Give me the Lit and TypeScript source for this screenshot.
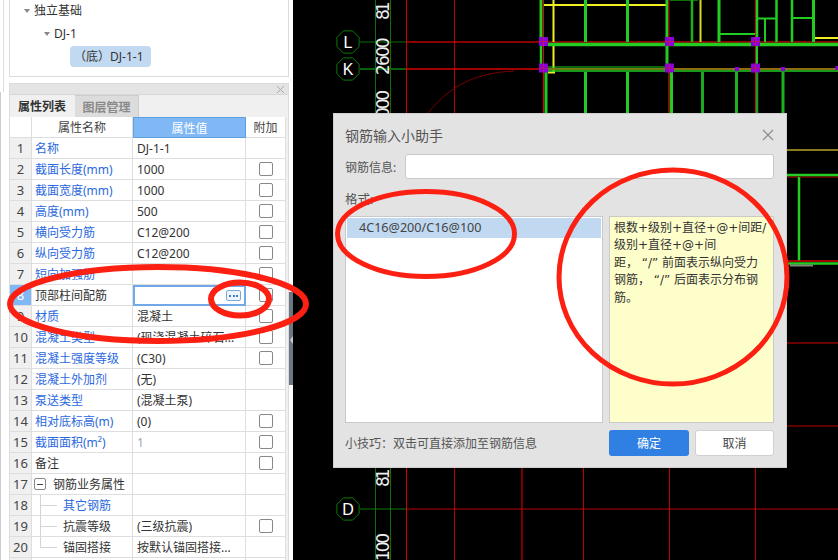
import { LitElement, html, css, svg } from "lit";
import { customElement } from "lit/decorators.js";

interface Row { n: number; name: string; val?: string; link?: boolean; cb?: boolean; muted?: boolean; kind?: string }

const ROWS: Row[] = [
  { n: 1, name: "名称", val: "DJ-1-1", link: true },
  { n: 2, name: "截面长度(mm)", val: "1000", link: true, cb: true },
  { n: 3, name: "截面宽度(mm)", val: "1000", link: true, cb: true },
  { n: 4, name: "高度(mm)", val: "500", link: true, cb: true },
  { n: 5, name: "横向受力筋", val: "C12@200", link: true, cb: true },
  { n: 6, name: "纵向受力筋", val: "C12@200", link: true, cb: true },
  { n: 7, name: "短向加强筋", link: true, cb: true },
  { n: 8, name: "顶部柱间配筋", cb: true, kind: "edit" },
  { n: 9, name: "材质", val: "混凝土", link: true, cb: true },
  { n: 10, name: "混凝土类型", val: "(现浇混凝土碎石...", link: true, cb: true },
  { n: 11, name: "混凝土强度等级", val: "(C30)", link: true, cb: true },
  { n: 12, name: "混凝土外加剂", val: "(无)", link: true },
  { n: 13, name: "泵送类型", val: "(混凝土泵)", link: true },
  { n: 14, name: "相对底标高(m)", val: "(0)", link: true, cb: true },
  { n: 15, name: "截面面积(m²)", val: "1", link: true, cb: true, muted: true },
  { n: 16, name: "备注", cb: true },
  { n: 17, name: "钢筋业务属性", kind: "group" },
  { n: 18, name: "其它钢筋", link: true, kind: "child" },
  { n: 19, name: "抗震等级", val: "(三级抗震)", cb: true, kind: "child" },
  { n: 20, name: "锚固搭接", val: "按默认锚固搭接...", kind: "last" },
  { n: 21, name: "" },
];

const RED = "#b80000";
const GREEN = "#22cc22";
const YEL = "#eeee22";
const PUR = "#8a00dc";

const PILL = "\uFF08底\uFF09DJ-1-1";
const TIP = "小技巧\uFF1A双击可直接添加至钢筋信息";
const NOTE = [
  "根数+级别+直径+@+间距/",
  "级别+直径+@+间",
  "距\uFF0C \u201C/\u201D 前面表示纵向受力",
  "钢筋\uFF0C \u201C/\u201D 后面表示分布钢",
  "筋。",
].join("\n");

const hv = (x1: number, y1: number, x2: number, y2: number, c: string, w = 1) =>
  svg`<line x1=${x1} y1=${y1} x2=${x2} y2=${y2} stroke=${c} stroke-width=${w} />`;

const hept = (cx: number, cy: number, r: number) => {
  const p: string[] = [];
  for (let i = 0; i < 8; i++) {
    const a = (Math.PI * 2 * i) / 8 + Math.PI / 8;
    p.push(`${(cx + r * Math.cos(a)).toFixed(1)},${(cy + r * Math.sin(a)).toFixed(1)}`);
  }
  return p.join(" ");
};

const axis = (cy: number, label: string) => svg`
  <polygon points=${hept(348, cy, 12)} fill="#000" stroke="#0b7a0b" stroke-width="1" />
  <text x="348" y=${cy + 6} text-anchor="middle" fill="#fff" font-size="16" font-family="Liberation Sans, sans-serif">${label}</text>`;

const vtext = (y: number, t: string) => svg`
  <text transform="translate(389 ${y}) rotate(-90)" fill="#eee" font-size="17" letter-spacing="0.3" font-family="DejaVu Sans, sans-serif" textLength=${t.length * 9.5}>${t}</text>`;

const pur = (x: number, y: number, s = 9) => svg`
  <rect x=${x - s / 2} y=${y - s / 2} width=${s} height=${s} fill=${PUR} />
  ${s > 4 ? hv(x - s / 2, y, x + s / 2, y, "#c01060", 1) : ""}
  ${s > 4 ? hv(x, y - s / 2, x, y + s / 2, "#c01060", 1) : ""}`;

@customElement("app-root")
export class AppRoot extends LitElement {
  static styles = css`
    :host {
      display: block;
      position: relative;
      width: 838px;
      height: 560px;
      overflow: hidden;
      background: #fff;
      font-family: "Noto Sans", "Noto Sans CJK SC", sans-serif;
      font-size: 12px;
      color: #333;
    }
    .main { display: flex; height: 560px; }
    .left {
      width: 289px;
      box-sizing: border-box;
      padding-left: 9px;
      display: flex;
      flex-direction: column;
      gap: 6px;
      background:
        linear-gradient(#ddd, #ddd) 3px 0 / 1px 92px no-repeat,
        linear-gradient(#ccc, #ccc) 0 92px / 1px 100% no-repeat,
        #fff;
    }
    .split { width: 4px; padding-top: 292px; flex: none; }
    .split-bar {
      height: 93px;
      background: #6c7783;
      display: flex;
      align-items: center;
      justify-content: center;
    }
    .split-arrow {
      width: 0; height: 0;
      border-top: 4px solid transparent;
      border-bottom: 4px solid transparent;
      border-right: 3px solid #c8ccd0;
      margin-top: 3px;
    }
    .tree {
      height: 77px;
      box-sizing: border-box;
      border: 1px solid #dcdcdc;
      border-top: none;
      background: #fff;
      display: flex;
      flex-direction: column;
      line-height: 17px;
    }
    .tnode { display: flex; align-items: center; height: 23px; }
    .tri {
      width: 0; height: 0;
      border-left: 3.5px solid transparent;
      border-right: 3.5px solid transparent;
      border-top: 4px solid #888;
      margin-right: 4px;
    }
    .t1 { padding-left: 14px; margin-top: -1px; }
    .t2 { padding-left: 34px; }
    .t3 { padding-left: 60px; margin-top: 1px; }
    .pill {
      background: #c2d9f2;
      border-radius: 4px;
      height: 21px;
      width: 81px;
      box-sizing: border-box;
      padding-left: 4px;
      display: flex;
      align-items: center;
      white-space: nowrap;
    }
    .props {
      flex: 1;
      min-height: 0;
      box-sizing: border-box;
      border: 1px solid #dcdcdc;
      border-bottom: none;
      background: #f0f0f0;
      overflow: hidden;
    }
    .phead {
      height: 10px;
      background: #e4e4e4;
      display: flex;
      justify-content: flex-end;
      padding-right: 3px;
      border-bottom: 1px solid #d8d8d8;
    }
    .phead svg { display: block; margin-top: 1px; }
    .tabs { display: flex; height: 22px; }
    .tab {
      width: 64px;
      height: 22px;
      box-sizing: border-box;
      display: flex;
      align-items: center;
      justify-content: center;
      font-weight: 700;
      color: #333;
    }
    .tab.off {
      background: #dcdcdc;
      color: #8a8a8a;
      margin-left: 1px;
      border-right: 1px solid #ccc;
      border-top: 1px solid #ccc;
    }
    .grid { width: 276px; background: #fff; }
    .row {
      display: grid;
      grid-template-columns: 22px 101px 113px 40px;
      height: 21px;
    }
    .c {
      box-sizing: border-box;
      border-right: 1px solid #dedede;
      border-bottom: 1px solid #dedede;
      display: flex;
      align-items: center;
      white-space: nowrap;
      overflow: hidden;
      position: relative;
    }
    .num { justify-content: center; background: #f0f0f0; font-size: 13px; color: #444; }
    .num.sel { background: #7fb8f5; color: #fff; }
    .name { padding-left: 3px; }
    .link { color: #2b69de; }
    .val { padding-left: 4px; }
    .muted { color: #9aa6b4; }
    .head { justify-content: center; color: #444; }
    .head.hval { background: #80b8f6; border: 1px solid #5c9fe2; color: #fff; }
    .add { justify-content: center; }
    .cb {
      width: 12px; height: 12px;
      border: 1px solid #888;
      border-radius: 2px;
      background: #fff;
    }
    .edit { border: 2px solid #71a9e8; justify-content: flex-end; padding-right: 3px; }
    .dots {
      width: 15px; height: 11px;
      box-sizing: border-box;
      border: 1px solid #7aa9dc;
      border-radius: 2px;
      background: #eef5fd;
      display: flex;
      align-items: center;
      justify-content: center;
      gap: 1.5px;
    }
    .dots i { width: 2px; height: 2px; background: #3c7fd0; display: block; }
    .exp {
      width: 12px; height: 12px;
      box-sizing: border-box;
      border: 1px solid #888;
      border-radius: 2px;
      display: flex;
      align-items: center;
      justify-content: center;
      margin-left: -1px;
      margin-right: 7px;
    }
    .exp i { width: 6px; height: 1px; background: #444; display: block; }
    .indent { padding-left: 31px; }
    .guide-v { position: absolute; left: 8px; top: 0; bottom: 0; width: 1px; background: #d4d4d4; }
    .guide-v.half { bottom: 50%; }
    .guide-h { position: absolute; left: 8px; top: 50%; width: 17px; height: 1px; background: #d4d4d4; }

    .canvas { flex: 1; position: relative; background: #000; }
    .canvas svg { display: block; }
    .dialog {
      position: absolute;
      left: 40px;
      top: 113px;
      width: 454px;
      height: 355px;
      box-sizing: border-box;
      background: #e3e3e3;
      border: 1px solid #cfcfcf;
      padding: 11px 12px 11px 11px;
      display: flex;
      flex-direction: column;
      color: #555;
      font-size: 12px;
    }
    .d-title { display: flex; justify-content: space-between; align-items: center; height: 20px; font-size: 14px; }
    .d-info { display: flex; align-items: center; margin-top: 9px; height: 25px; }
    .d-info label { width: 60px; flex: none; white-space: nowrap; }
    .d-input {
      flex: 1;
      height: 25px;
      box-sizing: border-box;
      background: #fff;
      border: 1px solid #c9c9c9;
      border-radius: 3px;
    }
    .d-fmt { margin-top: 12px; height: 18px; line-height: 18px; font-size: 12.5px; }
    .d-body { display: flex; gap: 6px; margin-top: 7px; height: 208px; }
    .d-list {
      width: 258px;
      box-sizing: border-box;
      background: #fff;
      border: 1px solid #c9c9c9;
      padding: 1px;
    }
    .d-item {
      height: 20px;
      background: #c0d8f0;
      padding-left: 12px;
      font-size: 12.6px;
      line-height: 20px;
      color: #444;
    }
    .d-note {
      width: 165px;
      box-sizing: border-box;
      background: #fefeca;
      border: 1px solid #c9c9c9;
      padding: 3px 4px;
      font-family: "DejaVu Sans", "Noto Sans CJK SC", sans-serif;
      font-size: 12px;
      line-height: 17.4px;
      color: #333;
      white-space: pre;
    }
    .d-foot { display: flex; align-items: center; margin-top: 7px; height: 26px; }
    .d-tip { flex: 1; font-size: 12px; white-space: nowrap; }
    .btn {
      height: 26px;
      box-sizing: border-box;
      border-radius: 3px;
      display: flex;
      align-items: center;
      justify-content: center;
      font-size: 12px;
    }
    .btn.ok { width: 80px; background: #2f80e2; color: #fff; }
    .btn.no { width: 79px; margin-left: 6px; background: #fff; border: 1px solid #d0d0d0; color: #444; }
    .marks { position: absolute; left: 0; top: 0; pointer-events: none; }
  `;

  private renderRow(r: Row) {
    const kids = r.kind === "child" || r.kind === "last";
    const nameCls = `c name ${r.link ? "link" : ""} ${kids ? "indent" : ""}`;
    return html`<div class="row">
      <div class="c num ${r.kind === "edit" ? "sel" : ""}">${r.n === 21 ? "" : r.n}</div>
      <div class=${nameCls}>
        ${r.kind === "group" ? html`<span class="exp"><i></i></span>` : ""}
        ${kids ? html`<span class="guide-v ${r.kind === "last" ? "half" : ""}"></span><span class="guide-h"></span>` : ""}
        ${r.name}
      </div>
      ${r.kind === "edit"
        ? html`<div class="c edit"><span class="dots"><i></i><i></i><i></i></span></div>`
        : html`<div class="c val ${r.muted ? "muted" : ""}">${r.val ?? ""}</div>`}
      <div class="c add">${r.cb ? html`<span class="cb"></span>` : ""}</div>
    </div>`;
  }

  private renderCanvas() {
    return svg`
      ${hv(375.5, 0, 375.5, 560, "#0b6e0b")}
      ${hv(390.5, 0, 390.5, 560, "#0b6e0b")}
      ${hv(360, 42, 406, 42, "#0b6e0b")}
      ${hv(360, 69, 406, 69, "#0b5e0b", 2)}
      ${hv(360, 509, 406, 509, "#0b7a0b")}
      ${hv(406, 42, 838, 42, RED, 1.5)}
      ${hv(406, 69, 548, 69, "#a00000", 2)}
      ${hv(406, 509, 838, 509, RED, 1)}
      ${hv(787, 150, 838, 150, "#8a7a20", 2)}
      ${hv(787, 343, 838, 343, "#8a0000", 1.5)}
      ${hv(787, 426, 838, 426, RED, 1)}
      ${hv(787, 177, 838, 177, RED, 1)}
      ${hv(787, 175, 838, 175, GREEN, 2.5)}
      ${hv(799, 177, 799, 261, GREEN, 2.5)}
      ${hv(787, 261, 838, 261, "#dd0000", 1.5)}
      ${hv(787, 263.5, 838, 263.5, GREEN, 2.5)}
      ${hv(790, 265.5, 813, 265.5, "#7a8a7a", 2)}
      ${hv(406.5, 0, 406.5, 560, "#d00000")}
      ${hv(454.5, 0, 454.5, 560, "#b80000")}
      ${hv(522, 460, 522, 560, "#a00000", 1.5)}
      ${hv(583.5, 460, 583.5, 560, "#c00000")}
      ${hv(669.5, 460, 669.5, 560, "#c00000")}
      ${hv(755.5, 460, 755.5, 560, "#c00000")}
      <path d="M428 113 C445 92 468 73 514 71" fill="none" stroke="#7a0000" stroke-width="1" />

      ${hv(541, 0, 541, 42, GREEN, 3)}
      ${hv(541, 44, 541, 69, GREEN, 2.5)}
      ${hv(543, 5, 666, 5, YEL, 2)}
      ${hv(553.5, 0, 553.5, 42, YEL, 2)}
      ${hv(553.5, 46, 553.5, 72, YEL, 2)}
      ${hv(548, 72.5, 555, 72.5, YEL, 2)}
      ${hv(585.5, 0, 585.5, 42, GREEN, 3)}
      ${hv(627.5, 0, 627.5, 42, GREEN, 3)}
      ${hv(667, 0, 667, 69, GREEN, 3)}
      ${hv(669, 0, 669, 42, "#c00000", 1)}
      ${hv(548, 44.5, 838, 44.5, GREEN, 3.5)}
      ${hv(543.5, 0, 543.5, 113, "#e00000", 1)}
      ${hv(548, 67, 669, 67, GREEN, 1)}
      ${hv(548, 69, 669, 69, "#707a10", 2)}
      ${hv(548, 71, 838, 71, GREEN, 1.5)}
      ${hv(672, 69, 838, 69, "#8a7010", 2)}
      ${hv(546, 72, 546, 113, GREEN, 3)}
      ${hv(585.5, 72, 585.5, 113, GREEN, 3)}
      ${hv(627.5, 72, 627.5, 113, GREEN, 3)}
      ${hv(671.5, 72, 671.5, 113, GREEN, 3)}
      ${hv(669, 72, 669, 113, "#a02000", 1.5)}
      ${hv(702.5, 72, 702.5, 113, "#1fa81f", 3)}
      ${hv(736.5, 72, 736.5, 113, "#1fb01f", 3)}
      ${hv(757, 72, 757, 113, "#1f9a1f", 2.5)}
      ${hv(755.5, 72, 755.5, 113, "#b02000", 1)}
      ${hv(783, 72, 783, 113, "#1fb01f", 3)}
      ${hv(670, 0.5, 698, 0.5, "#0b6e0b", 1)}
      ${hv(692, 0, 692, 42, "#1fb01f", 2.5)}
      ${hv(700.5, 0, 700.5, 42, "#d8d820", 2)}
      ${hv(719, 0, 719, 42, GREEN, 3)}
      ${hv(720, 34, 755, 34, GREEN, 2)}
      ${hv(757, 0, 757, 42, GREEN, 2.5)}
      ${hv(755.5, 0, 755.5, 69, "#b02000", 1)}
      ${hv(757, 45, 757, 69, GREEN, 2)}
      ${hv(758, 18.5, 777, 18.5, GREEN, 2)}
      ${hv(765, 19, 765, 42, GREEN, 2)}
      ${hv(776.5, 0, 776.5, 42, GREEN, 2.5)}
      ${hv(792, 0, 792, 42, GREEN, 2.5)}
      ${hv(793, 18, 813, 18, GREEN, 2)}
      ${hv(813.5, 0, 813.5, 42, GREEN, 3)}
      ${hv(815, 38, 838, 38, YEL, 2)}
      ${pur(543.5, 41.5)}${pur(669.5, 41.5)}${pur(755.5, 41.5)}
      ${pur(543.5, 68)}${pur(669.5, 68)}${pur(755.5, 68)}
      ${pur(737, 69, 4)}${pur(783, 69, 4)}${pur(837.5, 68, 4)}
      ${axis(42, "L")}${axis(69, "K")}${axis(509, "D")}
      ${vtext(20, "81")}
      ${vtext(75, "2600")}
      ${vtext(118, "000")}
      ${vtext(487, "81")}
      ${vtext(561, "100")}
    `;
  }

  render() {
    return html`
      <div class="main">
        <div class="left">
          <div class="tree">
            <div class="tnode t1"><span class="tri"></span>独立基础</div>
            <div class="tnode t2"><span class="tri"></span>DJ-1</div>
            <div class="t3"><div class="pill">${PILL}</div></div>
          </div>
          <div class="props">
            <div class="phead">
              <svg width="9" height="9" viewBox="0 0 9 9"><path d="M1 1l7 7M8 1l-7 7" stroke="#aaa" fill="none" /></svg>
            </div>
            <div class="tabs">
              <div class="tab">属性列表</div>
              <div class="tab off">图层管理</div>
            </div>
            <div class="grid">
              <div class="row">
                <div class="c"></div>
                <div class="c head">属性名称</div>
                <div class="c head hval">属性值</div>
                <div class="c head">附加</div>
              </div>
              ${ROWS.map((r) => this.renderRow(r))}
            </div>
          </div>
        </div>
        <div class="split"><div class="split-bar"><span class="split-arrow"></span></div></div>
        <div class="canvas">
          <svg width="545" height="560" viewBox="293 0 545 560">${this.renderCanvas()}</svg>
          <div class="dialog">
            <div class="d-title">
              <span>钢筋输入小助手</span>
              <svg width="12" height="12" viewBox="0 0 12 12"><path d="M1 1l10 10M11 1L1 11" stroke="#8a8a8a" stroke-width="1.1" fill="none" /></svg>
            </div>
            <div class="d-info"><label>钢筋信息:</label><div class="d-input"></div></div>
            <div class="d-fmt">格式:</div>
            <div class="d-body">
              <div class="d-list"><div class="d-item">4C16@200/C16@100</div></div>
              <div class="d-note">${NOTE}</div>
            </div>
            <div class="d-foot">
              <div class="d-tip">${TIP}</div>
              <div class="btn ok">确定</div>
              <div class="btn no">取消</div>
            </div>
          </div>
        </div>
      </div>
      <svg class="marks" width="838" height="560" viewBox="0 0 838 560" fill="none" stroke="#fb2012">
        <ellipse cx="158" cy="304" rx="148" ry="37" stroke-width="6" />
        <ellipse cx="240" cy="299" rx="29" ry="16.5" stroke-width="6" />
        <ellipse cx="426" cy="234" rx="88.5" ry="42.5" stroke-width="5" />
        <ellipse cx="673" cy="277" rx="114" ry="107" stroke-width="5" />
      </svg>
    `;
  }
}
